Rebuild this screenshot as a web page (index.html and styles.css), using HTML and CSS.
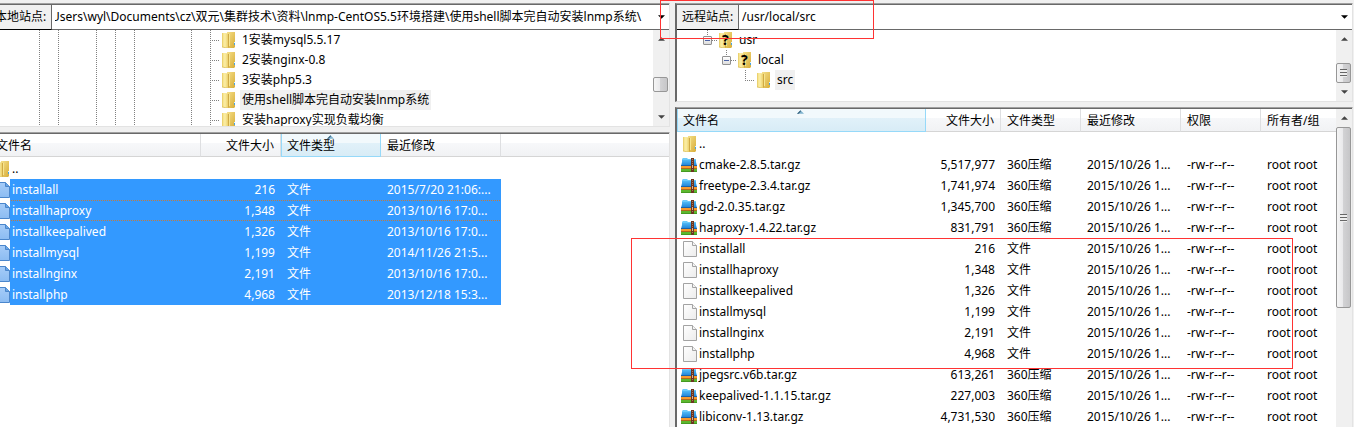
FILE: index.html
```html
<!DOCTYPE html>
<html lang="zh-CN">
<head>
<meta charset="utf-8">
<title>文件传输</title>
<link rel="stylesheet" href="styles.css">
</head>
<body>
<svg class="defs" aria-hidden="true">
  <defs>
    <linearGradient id="gold" x1="0" x2="1"><stop offset="0" stop-color="#f3dc7c"/><stop offset=".5" stop-color="#fbeea6"/><stop offset="1" stop-color="#ecd06a"/></linearGradient>
    <linearGradient id="gold2" x1="0" x2="1" y2="1"><stop offset="0" stop-color="#f5e08a"/><stop offset="1" stop-color="#d8ad38"/></linearGradient>
    <linearGradient id="paper" x2="1" y2="1"><stop offset="0" stop-color="#fff"/><stop offset="1" stop-color="#ececec"/></linearGradient>
    <linearGradient id="paperblue" x2="0" y2="1"><stop offset="0" stop-color="#a6ccf8"/><stop offset="1" stop-color="#8cbcf2"/></linearGradient>
    <linearGradient id="blue" x2="0" y2="1"><stop offset="0" stop-color="#4fb8f5"/><stop offset="1" stop-color="#1b7fd4"/></linearGradient>
    <symbol id="folder" viewBox="0 0 14 16">
      <path d="M5 0h8v15l-1 1H5z" fill="url(#gold2)"/>
      <path d="M0 1h4l2 1v13l-1 1-5-1z" fill="url(#gold)"/>
      <path d="M0 1v14l5 1" fill="none" stroke="#d8b94e" stroke-width=".7"/>
      <path d="M6 2h1v13l-1 1z" fill="#d0aa45"/>
      <path d="M7 2h1v12H7z" fill="#f6e590"/>
      <path d="M12 10h1v3h-1z" fill="#4da3d8"/>
      <path d="M12 10h1v1h-1z" fill="#d9f2ff"/>
    </symbol>
    <symbol id="file" viewBox="0 0 14 16">
      <path d="M.5.500h9L13.500 4.500v11H.5z" fill="url(#paper)" stroke="#a3a3a3"/>
      <path d="M9.500.500v4h4" fill="#f4f4f4" stroke="#a3a3a3"/>
    </symbol>
    <symbol id="file-sel" viewBox="0 0 14 16">
      <path d="M.5.500h9L13.500 4.500v11H.5z" fill="url(#paperblue)" stroke="#4a86cc"/>
      <path d="M9.500.500v4h4" fill="#6aa5e4" stroke="#4a86cc"/>
    </symbol>
    <symbol id="archive" viewBox="0 0 16 14">
      <path d="M1 1 2 0h4l1 1h8v2H1z" fill="#6ccafa"/>
      <path d="M1 2h14v2l1 4H0l1-4z" fill="url(#blue)"/>
      <path d="M0 7h16v1H0z" fill="#1b62a8"/>
      <path d="M0 8h16v2H0z" fill="#f79a2c"/>
      <path d="M0 10h16v1H0z" fill="#b06a1c"/>
      <path d="M0 11h16v3H0z" fill="#5cb82e"/><path d="M0 13h16v1H0z" fill="#469a22"/>
      <path d="M10 0h3v14h-3z" fill="#6b3620"/>
      <path d="M11 1h1v1h-1zm0 2h1v1h-1zm0 2h1v1h-1zm0 6h1v1h-1z" fill="#a9765a"/>
      <path d="M11 7h1v3h-1z" fill="#d8b394"/>
    </symbol>
    <symbol id="up" viewBox="0 0 8 4"><path d="M4 0 8 4H0z" fill="#444"/></symbol>
    <symbol id="down" viewBox="0 0 8 4"><path d="M0 0h8L4 4z" fill="currentColor"/></symbol>
    <symbol id="sort" viewBox="0 0 8 4"><path d="M4 0 8 4H0z" fill="#7fb3cf"/><path d="M4 0 0 4h2l2.500-3z" fill="#37607a"/></symbol>
  </defs>
</svg>
<main class="window">
  <section class="side local">
    <div class="box">
      <div class="sitebar">
        <label for="localpath">本地站点:</label>
        <input id="localpath" type="text" value="Users\wyl\Documents\cz\双元\集群技术\资料\lnmp-CentOS5.5环境搭建\使用shell脚本完自动安装lnmp系统\">
        <button class="drop" aria-label="展开"><svg><use href="#down"/></svg></button>
      </div>
      <div class="treewrap">
        <ul class="tree" id="localtree"></ul>
        <div class="scroll"><button aria-label="上"><svg><use href="#up"/></svg></button><div class="track"><i class="thumb"></i></div><button aria-label="下"><svg><use href="#down"/></svg></button></div>
      </div>
    </div>
    <div class="box list">
      <table>
        <colgroup><col class="c-name"><col class="c-80"><col class="c-100"><col class="c-120"><col></colgroup>
        <thead><tr><th>文件名</th><th class="num">文件大小</th><th class="sorted">文件类型<svg><use href="#sort"/></svg></th><th>最近修改</th><th></th></tr></thead>
        <tbody id="localfiles"></tbody>
      </table>
    </div>
  </section>
  <section class="side remote">
    <div class="box">
      <div class="sitebar">
        <label for="remotepath">远程站点:</label>
        <input id="remotepath" type="text" value="/usr/local/src">
        <button class="drop" aria-label="展开"><svg><use href="#down"/></svg></button>
      </div>
      <div class="treewrap">
        <ul class="tree" id="remotetree"></ul>
        <div class="scroll"><button aria-label="上"><svg><use href="#up"/></svg></button><div class="track"><i class="thumb grip"></i></div><button aria-label="下"><svg><use href="#down"/></svg></button></div>
      </div>
    </div>
    <div class="box list">
      <table>
        <colgroup><col class="c-rname"><col class="c-75"><col class="c-80"><col class="c-100"><col class="c-80"><col></colgroup>
        <thead><tr><th class="sorted">文件名<svg><use href="#sort"/></svg></th><th class="num">文件大小</th><th>文件类型</th><th>最近修改</th><th>权限</th><th>所有者/组</th></tr></thead>
        <tbody id="remotefiles"></tbody>
      </table>
      <div class="scroll"><button aria-label="上"><svg><use href="#up"/></svg></button><div class="track"><i class="thumb grip"></i></div></div>
    </div>
  </section>
  <div class="mark mark-path"></div>
  <div class="mark mark-files"></div>
</main>
<script src="app.js"></script>
</body>
</html>
```
FILE: styles.css
```css
* { box-sizing: border-box; }
body {
  margin: 0;
  height: 100vh;
  overflow: hidden;
  background: #f0f0f0;
  color: #000;
  font: 12px/20px "Noto Sans", "Noto Sans CJK SC", sans-serif;
}
.defs { position: absolute; width: 0; height: 0; }
svg { display: block; flex: none; }
button { padding: 0; border: 0; background: none; }
.window {
  position: relative;
  display: grid;
  grid-template-columns: 682fr 678fr;
  gap: 5px;
  height: 100vh;
  margin-left: -12px;
  padding: 3px 1px 0 0;
}
.side { display: flex; flex-direction: column; gap: 5px; min-width: 0; min-height: 0; }
.box {
  padding-top: 1px;
  border: 1px solid #e3e3e3;
  border-top-color: #a0a0a0;
  border-left: 2px solid #696969;
  background: #fff;
  box-shadow: inset 0 1px #696969;
}
.sitebar { display: flex; height: 25px; }
.sitebar label {
  width: 62px;
  padding: 2px 5px;
  background: #f0f0f0;
  border-right: 1px solid #696969;
  border-bottom: 1px solid #000;
  white-space: nowrap;
}
.sitebar input {
  flex: 1;
  min-width: 0;
  padding: 0 0 0 3px;
  border: 0;
  border-bottom: 1px solid #696969;
  outline: 0;
  font: inherit;
  background: #fff;
}
.local .sitebar input { text-indent: -4px; }
.drop { width: 16px; border-bottom: 1px solid #696969; background: #fff; color: #000; }
.drop svg { width: 7px; height: 4px; margin: 0 auto; }
.treewrap { display: flex; height: 96px; overflow: hidden; }
.remote .treewrap { height: 71px; }
.tree { flex: 1; margin: 0; padding: 0 0 0 40px; list-style: none; min-width: 0; }
.remote .tree { padding-left: 21px; }
.tree li { display: flex; height: 20px; white-space: nowrap; }
.tree .cell { flex: none; width: 19px; }
.tree .line {
  background: repeating-linear-gradient(#808080 0 1px, transparent 1px 2px) 9px 0 / 1px 100% no-repeat;
}
.tree .branch {
  background:
    repeating-linear-gradient(#808080 0 1px, transparent 1px 2px) 9px 0 / 1px 100% no-repeat,
    repeating-linear-gradient(90deg, #808080 0 1px, transparent 1px 2px) 9px 10px / 10px 1px no-repeat;
}
.tree .elbow {
  background:
    repeating-linear-gradient(#808080 0 1px, transparent 1px 2px) 9px 0 / 1px 10px no-repeat,
    repeating-linear-gradient(90deg, #808080 0 1px, transparent 1px 2px) 9px 10px / 10px 1px no-repeat;
}
.tree .open {
  display: flex;
  align-items: center;
  padding-left: 5px;
  background:
    repeating-linear-gradient(#808080 0 1px, transparent 1px 2px) 9px 0 / 1px 6px no-repeat,
    repeating-linear-gradient(90deg, #808080 0 1px, transparent 1px 2px) 14px 10px / 5px 1px no-repeat;
}
.tree button { width: 9px; height: 9px; border: 1px solid #919191; border-radius: 1px; background: linear-gradient(#4b63a7, #4b63a7) center / 5px 1px no-repeat, linear-gradient(#fff, #ddd); }
.tree .pic { flex: none; width: 20px; padding: 2px 0 0 2px; }
.tree svg { width: 14px; height: 16px; }
.tree .query { position: relative; }
.tree .query b { position: absolute; left: 5px; top: 0; font: bold 14px/20px "Noto Sans", sans-serif; }
.tree .name { padding: 0 2px; }
.tree .current { background: #f0f0f0; }
.list { display: flex; flex: 1; min-height: 0; overflow: hidden; border-bottom: 0; align-items: flex-start; }
.list .scroll { align-self: stretch; }
table { flex: 1; width: 0; table-layout: fixed; border-collapse: separate; border-spacing: 0; }
.c-name { width: 211px; }
.c-rname { width: 249px; }
.c-75 { width: 75px; }
.c-80 { width: 80px; }
.c-100 { width: 100px; }
.c-120 { width: 120px; }
th, td { padding: 0 6px; text-align: left; font-weight: 400; white-space: nowrap; }
.num { text-align: right; }
th {
  position: relative;
  height: 23px;
  padding-top: 2px;
  border-right: 1px solid #dedfe1;
  border-bottom: 1px solid #d5d5d5;
  background: linear-gradient(#fff 0 40%, #f7f8fa 40%, #f1f2f4);
}
th:last-child { border-right: 0; }
th.sorted { border-right-color: #96d9f9; border-bottom-color: #96d9f9; background: linear-gradient(#f2f9fc 0 40%, #e1f1f9 40%, #d8ecf6); box-shadow: inset 1px 0 #96d9f9; }
th svg { position: absolute; left: 50%; top: 1px; width: 7px; height: 4px; margin-left: -4px; }
tbody::before { content: ""; display: block; height: 1px; }
td { height: 21px; line-height: 21px; }
.entry { display: flex; align-items: center; }
.entry svg { width: 14px; height: 16px; margin-right: 2px; }
.entry svg.archive { width: 16px; height: 14px; margin: 0 2px 0 -2px; }
.selected td { color: #fff; background: #39f padding-box; }
.selected td:first-child { border-left: 20px solid transparent; padding-left: 2px; }
.selected td:last-child { background: none; }
.selected .entry { margin-left: -16px; }
.focused td:not(:last-child) {
  background:
    linear-gradient(90deg, #c47a3c 50%, transparent 50%) 0 0 / 2px 1px repeat-x padding-box,
    linear-gradient(90deg, #c47a3c 50%, transparent 50%) 0 100% / 2px 1px repeat-x padding-box,
    #39f padding-box;
}
.focused td:first-child:not(:last-child) { background-position: 1px 0, 1px 100%, 0 0; }
.scroll { display: flex; flex: none; flex-direction: column; width: 16px; background: #f0f0f0; }
.scroll button { height: 18px; color: #444; }
.scroll button svg { width: 7px; height: 4px; margin: 0 auto; }
.track { display: flex; flex-direction: column; flex: 1; }
.thumb { display: flex; margin: 29px 1px 0 0; height: 15px; border: 1px solid #979797; border-radius: 2px; background: linear-gradient(90deg, #f5f5f5, #e9e9eb 45%, #d2d2d4 50%, #c6c6c8); }
.remote .thumb { margin-top: 15px; height: 20px; }
.remote .list .thumb { margin-top: 0; height: 181px; }
.grip::before { content: ""; width: 7px; height: 8px; margin: auto; background: repeating-linear-gradient(#666 0 1px, #eee 1px 3px); }
.mark { position: absolute; border: 1px solid #f33; pointer-events: none; }
.mark-path { left: 672px; top: 0; width: 214px; height: 39px; }
.mark-files { left: 643px; top: 238px; width: 662px; height: 131px; }
```
FILE: app.js
```js
const icon = (id) => `<svg class="${id}"><use href="#${id}"/></svg>`;
const cells = (s) => [...s].map((c) => `<span class="cell ${{ '|': 'line', '+': 'branch', L: 'elbow' }[c] || ''}"></span>`).join('');

document.getElementById('localtree').innerHTML = ['1安装mysql5.5.17', '2安装nginx-0.8', '3安装php5.3', '使用shell脚本完自动安装lnmp系统', '安装haproxy实现负载均衡']
  .map((n, i) => `<li>${cells('|| |||  |+')}<span class="pic">${icon('folder')}</span><span class="name${i === 3 ? ' current' : ''}">${n}</span></li>`).join('');

const open = '<span class="cell open"><button aria-label="折叠"></button></span>';
const query = `<span class="pic query">${icon('folder')}<b>?</b></span>`;
document.getElementById('remotetree').innerHTML =
  `<li>${open}${query}<span class="name">usr</span></li>` +
  `<li>${cells(' ')}${open}${query}<span class="name">local</span></li>` +
  `<li>${cells('  L')}<span class="pic">${icon('folder')}</span><span class="name current">src</span></li>`;

const entry = (ic, n) => `<td><div class="entry">${icon(ic)}${n}</div></td>`;
document.getElementById('localfiles').innerHTML = `<tr>${entry('folder', '..')}<td></td><td></td><td></td><td></td></tr>` + [
  ['installall', '216', '2015/7/20 21:06:...'],
  ['installhaproxy', '1,348', '2013/10/16 17:0...'],
  ['installkeepalived', '1,326', '2013/10/16 17:0...'],
  ['installmysql', '1,199', '2014/11/26 21:5...'],
  ['installnginx', '2,191', '2013/10/16 17:0...'],
  ['installphp', '4,968', '2013/12/18 15:3...'],
].map(([n, s, d], i) => `<tr class="selected${i === 1 ? ' focused' : ''}">${entry('file-sel', n)}<td class="num">${s}</td><td>文件</td><td>${d}</td><td></td></tr>`).join('');

document.getElementById('remotefiles').innerHTML = `<tr>${entry('folder', '..')}<td></td><td></td><td></td><td></td><td></td></tr>` + [
  ['cmake-2.8.5.tar.gz', '5,517,977'],
  ['freetype-2.3.4.tar.gz', '1,741,974'],
  ['gd-2.0.35.tar.gz', '1,345,700'],
  ['haproxy-1.4.22.tar.gz', '831,791'],
  ['installall', '216'],
  ['installhaproxy', '1,348'],
  ['installkeepalived', '1,326'],
  ['installmysql', '1,199'],
  ['installnginx', '2,191'],
  ['installphp', '4,968'],
  ['jpegsrc.v6b.tar.gz', '613,261'],
  ['keepalived-1.1.15.tar.gz', '227,003'],
  ['libiconv-1.13.tar.gz', '4,731,530'],
].map(([n, s]) => {
  const gz = n.endsWith('.gz');
  return `<tr>${entry(gz ? 'archive' : 'file', n)}<td class="num">${s}</td><td>${gz ? '360压缩' : '文件'}</td><td>2015/10/26 1...</td><td>-rw-r--r--</td><td>root root</td></tr>`;
}).join('');
```
